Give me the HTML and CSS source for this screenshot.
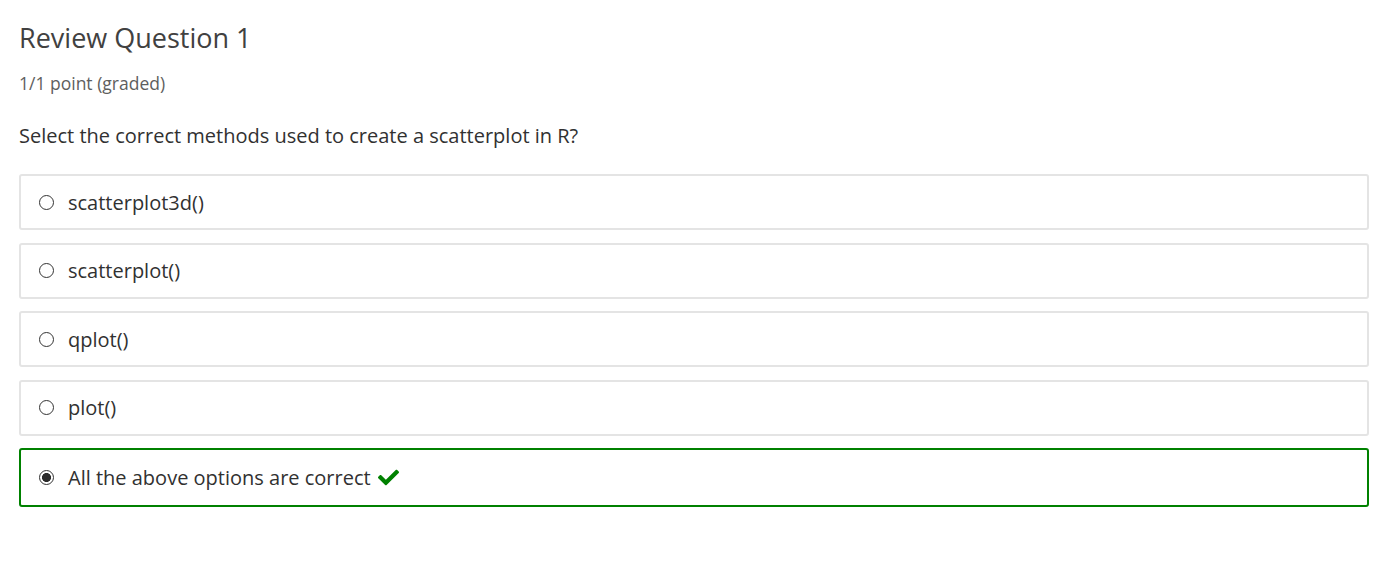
FILE: index.html
```html
<!DOCTYPE html>
<html>
<head>
<meta charset="utf-8">
<link rel="stylesheet" href="styles.css">
</head>
<body>
<div class="problem">
  <h3 class="title">Review Question 1</h3>
  <div class="progress">1/1 point (graded)</div>
  <p class="prompt">Select the correct methods used to create a scatterplot in R?</p>
  <div class="choices">
    <label class="choice"><input type="radio" name="q1"><span>scatterplot3d()</span></label>
    <label class="choice"><input type="radio" name="q1"><span>scatterplot()</span></label>
    <label class="choice"><input type="radio" name="q1"><span>qplot()</span></label>
    <label class="choice"><input type="radio" name="q1"><span>plot()</span></label>
    <label class="choice correct"><input type="radio" name="q1" checked><span>All the above options are correct</span>
      <svg class="check" viewBox="0 0 512 512" width="21" height="21"><path fill="#008100" d="M173.9 439.4l-166.4-166.4c-10-10-10-26.2 0-36.2l36.2-36.2c10-10 26.2-10 36.2 0L192 312.7 432.1 72.6c10-10 26.2-10 36.2 0l36.2 36.2c10 10 10 26.2 0 36.2l-294.4 294.4c-10 10-26.2 10-36.2 0z"/></svg>
    </label>
  </div>
</div>
</body>
</html>
```
FILE: styles.css
```css
html, body {
  margin: 0;
  padding: 0;
  background: #ffffff;
}
body {
  font-family: "Open Sans", "Liberation Sans", sans-serif;
  color: #313131;
}
.problem {
  padding: 19px 23px 0 19px;
}
.title {
  margin: 0;
  font-size: 27px;
  font-weight: 400;
  line-height: 38px;
  color: #414141;
}
.progress {
  margin-top: 16px;
  font-size: 17.5px;
  line-height: 20px;
  color: #5e5e5e;
}
.prompt {
  margin: 30px 0 0 0;
  font-size: 20px;
  line-height: 26px;
}
.choices {
  margin-top: 25px;
  display: flex;
  flex-direction: column;
  gap: 12.5px;
}
.choice {
  display: flex;
  align-items: center;
  height: 52px;
  box-sizing: content-box;
  border: 2px solid #e4e4e4;
  border-radius: 3px;
  padding: 0 17px;
  font-size: 20px;
}
.choice input {
  appearance: none;
  -webkit-appearance: none;
  box-sizing: border-box;
  margin: 0 14px 0 1px;
  width: 15px;
  height: 15px;
  border: 1.3px solid #333333;
  border-radius: 50%;
  background: #ffffff;
  flex: none;
}
.choice input:checked {
  background: radial-gradient(circle, #2b2b2b 0 4.2px, #ffffff 4.8px);
}
.choice.correct {
  border-color: #008100;
  height: 55px;
}
.check {
  margin-left: 7px;
}
```
